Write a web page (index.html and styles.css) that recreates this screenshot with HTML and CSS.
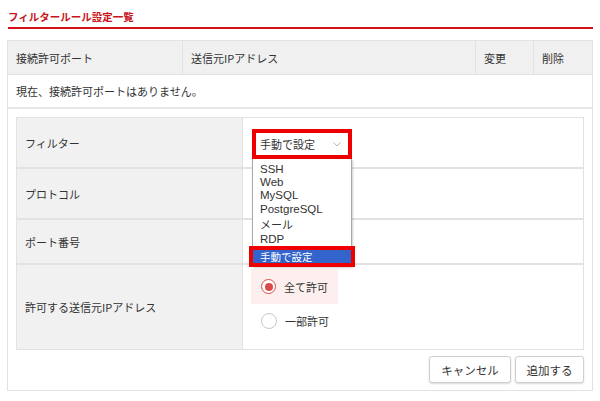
FILE: index.html
```html
<!DOCTYPE html>
<html lang="ja">
<head>
    <meta charset="UTF-8">
    <title>フィルタールール設定一覧</title>
    <link rel="stylesheet" href="styles.css">
</head>
<body>
    <div class="page">
        <h2 class="section-title">フィルタールール設定一覧</h2>

        <div class="rule-table">
            <div class="rule-head">
                <div class="col col-port">接続許可ポート</div>
                <div class="col col-ip">送信元IPアドレス</div>
                <div class="col col-edit">変更</div>
                <div class="col col-del">削除</div>
            </div>
            <div class="rule-empty">現在、接続許可ポートはありません。</div>

            <div class="rule-form">
                <div class="form-grid">
                    <div class="form-label row-filter">フィルター</div>
                    <div class="form-value row-filter">
                        <div class="select-wrap">
                            <div class="select-box">
                                <span>手動で設定</span>
                                <svg class="chevron" width="8" height="5" viewBox="0 0 8 5">
                                    <path d="M0.5 0.5 L4 4 L7.5 0.5" fill="none" stroke="#b8b8b8" stroke-width="1"/>
                                </svg>
                            </div>
                            <ul class="select-list">
                                <li>SSH</li>
                                <li>Web</li>
                                <li>MySQL</li>
                                <li>PostgreSQL</li>
                                <li class="jp">メール</li>
                                <li>RDP</li>
                                <li class="jp selected">手動で設定</li>
                            </ul>
                        </div>
                    </div>

                    <div class="form-label row-proto">プロトコル</div>
                    <div class="form-value row-proto"></div>

                    <div class="form-label row-port">ポート番号</div>
                    <div class="form-value row-port"></div>

                    <div class="form-label row-ip">許可する送信元IPアドレス</div>
                    <div class="form-value row-ip">
                        <div class="radio-group">
                            <label class="radio checked"><span class="dot"></span>全て許可</label>
                            <label class="radio"><span class="dot"></span>一部許可</label>
                        </div>
                    </div>
                </div>

                <div class="form-actions">
                    <button class="btn btn-cancel">キャンセル</button>
                    <button class="btn btn-add">追加する</button>
                </div>
            </div>
        </div>
    </div>
</body>
</html>
```

FILE: styles.css
```css
body {
    margin: 0;
    background-color: #fff;
    color: #333;
    font-family: 'Noto Sans CJK JP', 'Liberation Sans', sans-serif;
    font-size: 11px;
}

.page {
    width: 586px;
    padding: 10px 7px 0 7px;
}

/* Section title with red underline */
.section-title {
    margin: 0 0 11px 1px;
    padding-bottom: 3px;
    font-size: 10.5px;
    font-weight: bold;
    color: #c9141c;
    line-height: 14px;
    border-bottom: 2px solid #d4121b;
}

.rule-table {
    border: 1px solid #e2e2e2;
}

.rule-head {
    display: grid;
    grid-template-columns: 174px 293px 58px 1fr;
    height: 33px;
    background-color: #f0f0f0;
    border-bottom: 1px solid #e2e2e2;
}

.col {
    display: flex;
    align-items: center;
    padding-left: 8px;
    border-left: 1px solid #e2e2e2;
}

.col-port {
    border-left: none;
}

.rule-empty {
    height: 32px;
    line-height: 32px;
    padding-left: 8px;
    border-bottom: 2px solid #e8e8e8;
}

.rule-form {
    padding: 8px 8px 7px 8px;
}

.form-grid {
    display: grid;
    grid-template-columns: 226px 1fr;
    grid-template-rows: 51px 51px 45px 84px;
    border: 1px solid #e2e2e2;
}

.form-label {
    display: flex;
    align-items: center;
    padding-left: 8px;
    background-color: #f1f1f1;
    border-right: 1px solid #e2e2e2;
    border-bottom: 2px solid #e2e2e2;
}

.form-value {
    border-bottom: 2px solid #e2e2e2;
}

.row-ip {
    border-bottom: none;
}

.row-filter.form-value {
    display: flex;
    align-items: center;
    padding-left: 13px;
}

/* Select with open dropdown */
.select-wrap {
    position: relative;
    margin-top: 2px;
}

.select-box {
    display: flex;
    align-items: center;
    justify-content: space-between;
    width: 81px;
    height: 22px;
    padding: 0 7px 0 4px;
    background-color: #fff;
    outline: 4px solid #ee0000;
}

.chevron {
    margin-top: 2px;
}

.select-list {
    position: absolute;
    top: 26px;
    left: -4px;
    z-index: 2;
    width: 98px;
    margin: 0;
    padding: 3px 0 3px 0;
    list-style: none;
    background-color: #fff;
    border: 1px solid #a8a8a8;
    border-top: none;
    box-shadow: 1px 1px 2px rgba(0, 0, 0, 0.2);
    font-family: 'Liberation Sans', 'Noto Sans CJK JP', sans-serif;
    font-size: 11.5px;
}

.select-list li {
    height: 13.5px;
    line-height: 13.5px;
    padding-left: 7px;
}

.select-list li:first-child {
    height: 14px;
    line-height: 14px;
}

.select-list li.jp {
    height: 17px;
    line-height: 17px;
    font-family: 'Noto Sans CJK JP', sans-serif;
    font-size: 11px;
}

.select-list li.selected {
    height: 13px;
    line-height: 13px;
    margin-top: 3px;
    font-size: 10.5px;
    background-color: #3264cc;
    color: #fff;
    outline: 4px solid #ee0000;
}

/* Radios */
.radio-group {
    display: flex;
    flex-direction: column;
    padding: 4px 0 0 8px;
}

.radio {
    display: flex;
    align-items: center;
    width: 77px;
    height: 35px;
    padding-left: 10px;
    font-size: 11px;
}

.radio + .radio {
    height: 34px;
}

.radio.checked {
    background-color: #fcefee;
}

.dot {
    position: relative;
    width: 14px;
    height: 14px;
    margin-right: 8px;
    border: 1px solid #c8c8c8;
    border-radius: 50%;
    background-color: #fff;
}

.radio.checked .dot {
    border: 1.5px solid #dc4b4b;
    width: 13px;
    height: 13px;
}

.radio.checked .dot::after {
    content: '';
    position: absolute;
    top: 2.5px;
    left: 2.5px;
    width: 8px;
    height: 8px;
    border-radius: 50%;
    background-color: #dc4b4b;
}

.form-actions {
    display: flex;
    justify-content: flex-end;
    gap: 4px;
    margin-top: 6px;
}

.btn {
    height: 27px;
    padding: 0;
    background-color: #fff;
    color: #333;
    font-family: 'Noto Sans CJK JP', sans-serif;
    font-size: 11.5px;
    border: 1px solid #cfcfcf;
    border-radius: 3px;
    box-shadow: 0 1px 2px rgba(0, 0, 0, 0.15);
}

.btn-cancel {
    width: 82px;
}

.btn-add {
    width: 69px;
}
```
